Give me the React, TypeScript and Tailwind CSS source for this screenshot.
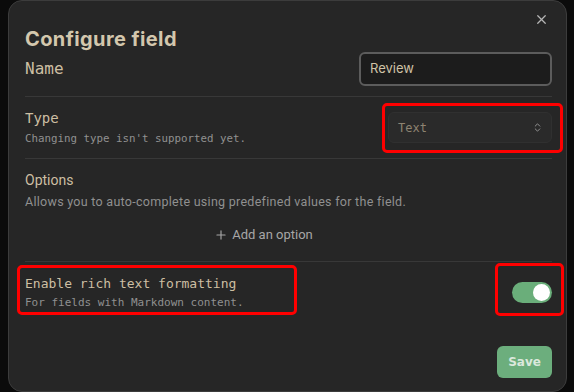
import { X, ChevronsUpDown, Plus } from "lucide-react";

const mono = "font-['DejaVu_Sans_Mono',monospace]";

const App = () => {
  return (
    <div className="h-[392px] w-[574px] overflow-hidden bg-[#0b0b0b]">
      <div className="relative ml-2 flex h-[392px] w-[559px] flex-col rounded-[14px] border border-[#3c3c3c] bg-[#262626] pl-4 pr-[14px] pt-[25px]">
        <button className="absolute right-[17px] top-[11px] text-[#b5b5b5]">
          <X size={15} strokeWidth={2} />
        </button>

        <h1 className="font-['Inter',sans-serif] text-[20px] font-bold leading-[26px] tracking-[0.4px] text-[#d3c7ad]">
          Configure field
        </h1>

        <div className="flex items-center justify-between">
          <span className={`${mono} text-[16px] text-[#cdbfa3]`}>Name</span>
          <div className="flex h-[34px] w-[193px] items-center rounded-md border-2 border-[#5c5c5c] bg-[#1c1c1c] px-[9px] font-['Inter',sans-serif] text-[13px] text-[#cfc2a6]">
            Review
          </div>
        </div>

        <div className="mt-[10px] border-t border-[#383838]" />

        <div className="flex items-center justify-between py-[6px]">
          <div className="flex flex-col">
            <span className={`${mono} text-[14px] leading-5 text-[#cdbfa3]`}>Type</span>
            <span className={`${mono} mt-[3px] text-[10.8px] leading-4 text-[#909090]`}>
              Changing type isn't supported yet.
            </span>
          </div>
          <div className="relative my-[9px]">
            <div className="flex h-[31px] w-[164px] items-center justify-between rounded-md border border-[#303030] bg-[#2a2a2a] pl-[9px] pr-[8px]">
              <span className={`${mono} text-[12px] text-[#8d8371]`}>Text</span>
              <ChevronsUpDown size={11} className="text-[#9a9a9a]" />
            </div>
            <div className="absolute -bottom-[10px] -left-[6px] -right-[11px] -top-[9px] rounded-[5px] border-[3px] border-[#ff0000]" />
          </div>
        </div>

        <div className="border-t border-[#383838]" />

        <div className="flex flex-col pb-[18px] pt-[12px] font-['Roboto',sans-serif]">
          <span className="text-[14px] leading-[18px] text-[#cdbfa3]">Options</span>
          <span className="mt-[5px] text-[12.5px] leading-4 tracking-[0.28px] text-[#909090]">
            Allows you to auto-complete using predefined values for the field.
          </span>
          <div className="mr-[50px] mt-[17px] flex items-center justify-center gap-[4px] text-[13px] leading-4 text-[#a6a6a6]">
            <Plus size={14} strokeWidth={2} />
            <span>Add an option</span>
          </div>
        </div>

        <div className="border-t border-[#383838]" />

        <div className="flex items-center justify-between pt-[12px]">
          <div className="relative flex flex-col">
            <span className={`${mono} text-[13px] leading-5 text-[#cdbfa3]`}>
              Enable rich text formatting
            </span>
            <span className={`${mono} mt-[1px] text-[11px] leading-4 text-[#909090]`}>
              For fields with Markdown content.
            </span>
            <div className="absolute -bottom-[4px] -left-2 -top-[9px] w-[280px] rounded-[5px] border-[3px] border-[#ff0000]" />
          </div>
          <div className="relative">
            <div className="flex h-[21px] w-[40px] items-center justify-end rounded-full bg-[#6aae7a] px-[2px]">
              <div className="h-[17px] w-[17px] rounded-full bg-white" />
            </div>
            <div className="absolute -bottom-[13px] -left-[17px] -right-[12px] -top-[19px] rounded-[5px] border-[3px] border-[#ff0000]" />
          </div>
        </div>

        <div className="mt-[35px] flex justify-end">
          <button className="h-[32px] w-[55px] rounded-md bg-[#6cae7d] font-['DejaVu_Sans',sans-serif] text-[12px] font-bold text-[#dbe8dc]">
            Save
          </button>
        </div>
      </div>
    </div>
  );
};

export default App;
